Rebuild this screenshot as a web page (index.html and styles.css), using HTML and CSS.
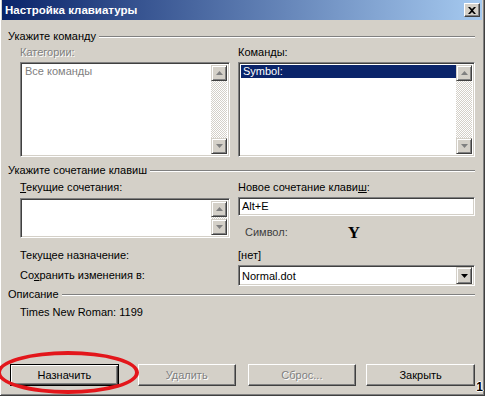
FILE: index.html
```html
<!DOCTYPE html>
<html lang="ru">
<head>
  <meta charset="UTF-8" />
  <title>Настройка клавиатуры</title>
  <link rel="stylesheet" href="styles.css">
</head>
<body>
  <div class="window">
    <div class="titlebar">
      <span class="title">Настройка клавиатуры</span>
      <span class="close">
        <svg width="8" height="7" viewBox="0 0 8 7"><path d="M0 0h2l2 2 2-2h2L5 3.5 8 7H6L4 5 2 7H0l3-3.5z" fill="#000"/></svg>
      </span>
    </div>

    <div class="content">
      <div class="group-head">Укажите команду</div>
      <div class="cols labels">
        <div class="label disabled">Категории:</div>
        <div class="label">Коман<u>д</u>ы:</div>
      </div>
      <div class="cols">
        <div class="listbox tall">
          <div class="items"><div class="item grey">Все команды</div></div>
          <div class="scrollbar">
            <div class="sbtn"><svg width="7" height="4" viewBox="0 0 7 4"><path d="M3.5 0L7 4H0z" fill="#808080"/></svg></div>
            <div class="track"></div>
            <div class="sbtn"><svg width="7" height="4" viewBox="0 0 7 4"><path d="M0 0h7L3.5 4z" fill="#808080"/></svg></div>
          </div>
        </div>
        <div class="listbox tall">
          <div class="items"><div class="item selected">Symbol:</div></div>
          <div class="scrollbar">
            <div class="sbtn"><svg width="7" height="4" viewBox="0 0 7 4"><path d="M3.5 0L7 4H0z" fill="#808080"/></svg></div>
            <div class="track"></div>
            <div class="sbtn"><svg width="7" height="4" viewBox="0 0 7 4"><path d="M0 0h7L3.5 4z" fill="#808080"/></svg></div>
          </div>
        </div>
      </div>

      <div class="group-head second">Укажите сочетание клавиш</div>
      <div class="cols labels low">
        <div class="label"><u>Т</u>екущие сочетания:</div>
        <div class="label">Новое сочетание клави<u>ш</u>:</div>
      </div>
      <div class="cols keys">
        <div class="listbox short">
          <div class="items"></div>
          <div class="scrollbar">
            <div class="sbtn"><svg width="7" height="4" viewBox="0 0 7 4"><path d="M3.5 0L7 4H0z" fill="#808080"/></svg></div>
            <div class="track"></div>
            <div class="sbtn"><svg width="7" height="4" viewBox="0 0 7 4"><path d="M0 0h7L3.5 4z" fill="#808080"/></svg></div>
          </div>
        </div>
        <div>
          <div class="field">Alt+E</div>
          <div class="symbol-row">
            <span class="label disabled-light">Символ:</span>
            <span class="glyph">Y</span>
          </div>
        </div>
      </div>
      <div class="cols assign">
        <div class="label">Текущее назначение:</div>
        <div class="label">[нет]</div>
      </div>
      <div class="cols save">
        <div class="label">Со<u>х</u>ранить изменения в:</div>
        <div class="combo">
          <span class="combo-text">Normal.dot</span>
          <span class="dropbtn"><svg width="7" height="4" viewBox="0 0 7 4"><path d="M0 0h7L3.5 4z" fill="#000"/></svg></span>
        </div>
      </div>

      <div class="group-head third">Описание</div>
      <div class="description">Times New Roman: 1199</div>

      <div class="buttons">
        <button class="btn default">Назначить</button>
        <button class="btn off b2">Удалить</button>
        <button class="btn off b3">Сброс...</button>
        <button class="btn b4">Закрыть</button>
      </div>
    </div>

    <div class="mark"></div>
    <div class="corner">1</div>
  </div>
</body>
</html>
```

FILE: styles.css
```css
body {
  margin: 0;
  font-family: "Liberation Sans", Arial, sans-serif;
  font-size: 11px;
  color: #000;
  background: #d4d0c8;
}

.window {
  position: relative;
  box-sizing: border-box;
  width: 485px;
  height: 396px;
  overflow: hidden;
  background: #d4d0c8;
  border-right: 1px solid #404040;
  border-bottom: 1px solid #404040;
  box-shadow: inset 1px 0 #fff, inset -1px -1px #808080;
}

.titlebar {
  display: flex;
  align-items: center;
  height: 20px;
  margin: 0 2px 0 2px;
  padding: 0 2px 0 3px;
  background: linear-gradient(to right, #0a246a, #a6caf0);
}

.title {
  color: #fff;
  font-weight: bold;
  font-size: 11.5px;
}

.close {
  margin-left: auto;
  width: 16px;
  height: 14px;
  box-sizing: border-box;
  display: flex;
  align-items: center;
  justify-content: center;
  background: #d4d0c8;
  border: 1px solid;
  border-color: #fff #404040 #404040 #fff;
  box-shadow: inset -1px -1px #808080;
}

.content {
  padding: 0 9px 0 8px;
}

.group-head {
  display: flex;
  align-items: center;
  height: 13px;
  line-height: 13px;
  margin-top: 10px;
}

.group-head::after {
  content: "";
  flex: 1;
  margin-left: 3px;
  border-top: 1px solid #808080;
  border-bottom: 1px solid #fff;
}

.group-head.second { margin-top: 7px; }
.group-head.third { margin-top: 2px; }

.cols {
  display: grid;
  grid-template-columns: 210px 237px;
  column-gap: 8px;
  padding-left: 12px;
}

.label {
  height: 13px;
  line-height: 13px;
  white-space: nowrap;
}

.labels { margin-top: 3px; margin-bottom: 3px; }
.labels.low { margin-top: 4px; margin-bottom: 2px; }

.disabled {
  color: #808080;
  text-shadow: 1px 1px #fff;
}

.disabled-light {
  color: #404040;
}

.listbox {
  display: flex;
  box-sizing: border-box;
  background: #fff;
  border: 1px solid;
  border-color: #808080 #fff #fff #808080;
  box-shadow: inset 1px 1px #404040, inset -1px -1px #d4d0c8;
  padding: 2px 2px 2px 2px;
}

.listbox.tall { height: 95px; }
.listbox.short { height: 40px; margin-top: 2px; }

.items {
  flex: 1;
}

.item {
  height: 13px;
  line-height: 13px;
  padding-left: 2px;
}

.item.grey { color: #808080; }

.item.selected {
  background: #0a246a;
  color: #fff;
}

.scrollbar {
  display: flex;
  flex-direction: column;
  width: 16px;
}

.track {
  flex: 1;
  background: repeating-conic-gradient(#fff 0 25%, #d4d0c8 0 50%) 0 0 / 2px 2px;
}

.sbtn {
  box-sizing: border-box;
  height: 16px;
  display: flex;
  align-items: center;
  justify-content: center;
  background: #d4d0c8;
  border: 1px solid;
  border-color: #d4d0c8 #404040 #404040 #d4d0c8;
  box-shadow: inset 1px 1px #fff, inset -1px -1px #808080;
}

.field {
  box-sizing: border-box;
  height: 19px;
  margin-top: 1px;
  padding: 2px 3px;
  line-height: 13px;
  background: #fff;
  border: 1px solid;
  border-color: #808080 #fff #fff #808080;
  box-shadow: inset 1px 1px #404040, inset -1px -1px #d4d0c8;
}

.symbol-row {
  display: flex;
  align-items: center;
  margin-top: 9px;
  padding-left: 7px;
  height: 15px;
}

.glyph {
  margin-left: 60px;
  font-family: "Liberation Serif", "Times New Roman", serif;
  font-weight: bold;
  font-size: 17px;
  line-height: 15px;
}

.assign { margin-top: 9px; }

.save {
  margin-top: 3px;
  align-items: center;
}

.combo {
  display: flex;
  align-items: center;
  box-sizing: border-box;
  height: 21px;
  padding: 2px;
  background: #fff;
  border: 1px solid;
  border-color: #808080 #fff #fff #808080;
  box-shadow: inset 1px 1px #404040, inset -1px -1px #d4d0c8;
}

.combo-text {
  flex: 1;
  padding-left: 1px;
}

.dropbtn {
  box-sizing: border-box;
  width: 16px;
  height: 17px;
  display: flex;
  align-items: center;
  justify-content: center;
  background: #d4d0c8;
  border: 1px solid;
  border-color: #d4d0c8 #404040 #404040 #d4d0c8;
  box-shadow: inset 1px 1px #fff, inset -1px -1px #808080;
}

.description {
  margin-top: 5px;
  padding-left: 12px;
  height: 13px;
  line-height: 13px;
}

.buttons {
  display: flex;
  margin-top: 45px;
  padding-left: 2px;
}

.btn {
  box-sizing: border-box;
  width: 109px;
  height: 22px;
  padding: 0;
  font-family: inherit;
  font-size: 11px;
  color: #000;
  background: #d4d0c8;
  border: 1px solid;
  border-color: #fff #404040 #404040 #fff;
  box-shadow: inset -1px -1px #808080, inset 1px 1px #d4d0c8;
}

.btn.default {
  border: 1px solid #000;
  box-shadow: inset 1px 1px #fff, inset -1px -1px #404040, inset -2px -2px #808080;
}

.btn.off {
  color: #808080;
  text-shadow: 1px 1px #fff;
}

.b2 { width: 98px; margin-left: 19px; }
.b3 { margin-left: 12px; }
.b4 { margin-left: 10px; }

.mark {
  position: absolute;
  left: -3px;
  top: 351px;
  width: 142px;
  height: 43px;
  box-sizing: border-box;
  border: 4px solid #e3161b;
  border-radius: 50%;
}

.corner {
  position: absolute;
  right: 1px;
  bottom: 2px;
  font-weight: bold;
  font-size: 12px;
  line-height: 12px;
  color: #000;
  text-shadow: 1px 0 #fff, -1px 0 #fff, 0 1px #fff, 0 -1px #fff;
}
```
